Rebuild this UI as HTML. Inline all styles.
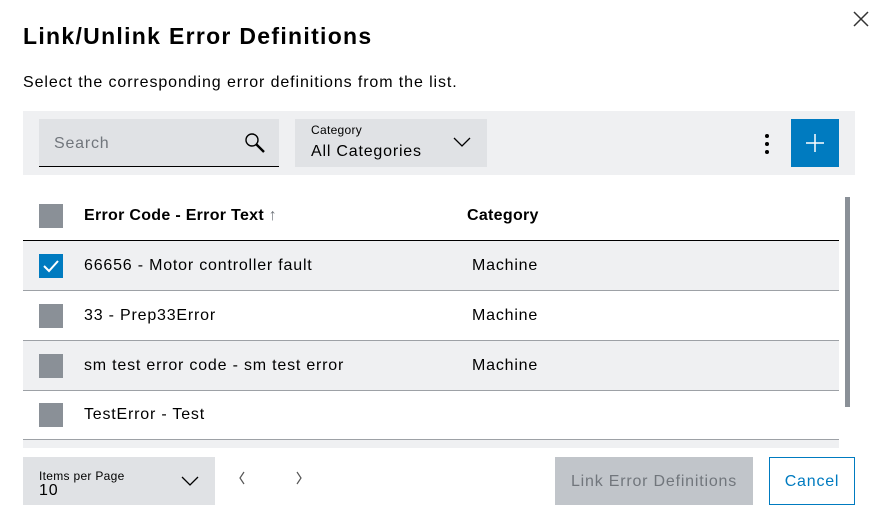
<!DOCTYPE html><html><head><style>
*{margin:0;padding:0;box-sizing:border-box}
body{width:881px;height:529px;background:#fff;font-family:"Liberation Sans",sans-serif;color:#000;position:relative;overflow:hidden;letter-spacing:0.8px}
.a{position:absolute}
.cb{position:absolute;left:39px;width:24px;height:24px;background:#8a9097}
.row{position:absolute;left:23px;width:816px;height:50px;border-bottom:1px solid #9da1a6;font-size:16px}
.row span{position:absolute;top:16px}
</style></head><body>
<div class="a" style="left:23px;top:23px;font-size:23px;font-weight:bold;letter-spacing:1.3px">Link/Unlink Error Definitions</div>
<svg class="a" style="left:852px;top:10px" width="18" height="18"><path d="M2 2L16 16M16 2L2 16" stroke="#333" stroke-width="1.5"/></svg>
<div class="a" style="left:23px;top:74px;font-size:16px;letter-spacing:0.9px">Select the corresponding error definitions from the list.</div>
<div class="a" style="left:23px;top:111px;width:832px;height:64px;background:#eff0f2"></div>
<div class="a" style="left:39px;top:119px;width:240px;height:48px;background:#e0e2e5;border-bottom:1px solid #000"></div>
<div class="a" style="left:54px;top:135px;font-size:16px;color:#71767c">Search</div>
<svg class="a" style="left:243px;top:131px" width="24" height="24"><circle cx="9" cy="9" r="6" fill="none" stroke="#000" stroke-width="1.4"/><path d="M13 13L21 21" stroke="#000" stroke-width="2.4"/></svg>
<div class="a" style="left:295px;top:119px;width:192px;height:48px;background:#e0e2e5"></div>
<div class="a" style="left:311px;top:123px;font-size:12px;letter-spacing:0.3px">Category</div>
<div class="a" style="left:311px;top:143px;font-size:16px">All Categories</div>
<svg class="a" style="left:453px;top:136px" width="18" height="12"><path d="M1 2L9 10L17 2" fill="none" stroke="#000" stroke-width="1.3"/></svg>
<div class="a" style="left:765px;top:134px;width:4px;height:4px;border-radius:2px;background:#000;box-shadow:0 8px 0 #000,0 16px 0 #000"></div>
<div class="a" style="left:791px;top:119px;width:48px;height:48px;background:#007bc0"></div>
<svg class="a" style="left:805px;top:133px" width="20" height="20"><path d="M10 1V19M1 10H19" stroke="#fff" stroke-width="1.5"/></svg>
<div class="a" style="left:23px;top:197px;width:816px;height:44px;border-bottom:1px solid #000"></div>
<div class="cb" style="top:204px"></div>
<div class="a" style="left:84px;top:207px;font-size:16px;font-weight:bold;letter-spacing:0.3px">Error Code - Error Text <span style="font-weight:normal;color:#71767c">↑</span></div>
<div class="a" style="left:467px;top:207px;font-size:16px;font-weight:bold;letter-spacing:0.3px">Category</div>
<div class="row" style="top:241px;background:#eff0f2"><span style="left:61px">66656 - Motor controller fault</span><span style="left:449px">Machine</span></div>
<div class="cb" style="top:254px;background:#007bc0"></div>
<svg class="a" style="left:39px;top:254px" width="24" height="24"><path d="M5 12L10 17L19 7" fill="none" stroke="#fff" stroke-width="2"/></svg>
<div class="row" style="top:291px"><span style="left:61px">33 - Prep33Error</span><span style="left:449px">Machine</span></div>
<div class="cb" style="top:304px"></div>
<div class="row" style="top:341px;background:#eff0f2"><span style="left:61px">sm test error code - sm test error</span><span style="left:449px">Machine</span></div>
<div class="cb" style="top:354px"></div>
<div class="row" style="top:390px"><span style="left:61px">TestError - Test</span></div>
<div class="cb" style="top:403px"></div>
<div class="a" style="left:23px;top:440px;width:816px;height:8px;background:#eff0f2"></div>
<div class="a" style="left:845px;top:197px;width:5px;height:210px;background:#8a9097"></div>
<div class="a" style="left:23px;top:457px;width:192px;height:48px;background:#e0e2e5"></div>
<div class="a" style="left:39px;top:469px;font-size:12px;letter-spacing:0.3px">Items per Page</div>
<div class="a" style="left:39px;top:482px;font-size:16px">10</div>
<svg class="a" style="left:181px;top:475px" width="18" height="12"><path d="M1 2L9 10L17 2" fill="none" stroke="#000" stroke-width="1.3"/></svg>
<svg class="a" style="left:237px;top:470px" width="10" height="16"><path d="M7 2L3 8L7 14" fill="none" stroke="#555" stroke-width="1.2"/></svg>
<svg class="a" style="left:294px;top:470px" width="10" height="16"><path d="M3 2L7 8L3 14" fill="none" stroke="#555" stroke-width="1.2"/></svg>
<div class="a" style="left:555px;top:457px;width:198px;height:48px;background:#c1c5ca;color:#71767c;font-size:16px;text-align:center;line-height:50px">Link Error Definitions</div>
<div class="a" style="left:769px;top:457px;width:86px;height:48px;border:1px solid #007bc0;color:#007bc0;font-size:16px;text-align:center;line-height:48px">Cancel</div>
</body></html>
